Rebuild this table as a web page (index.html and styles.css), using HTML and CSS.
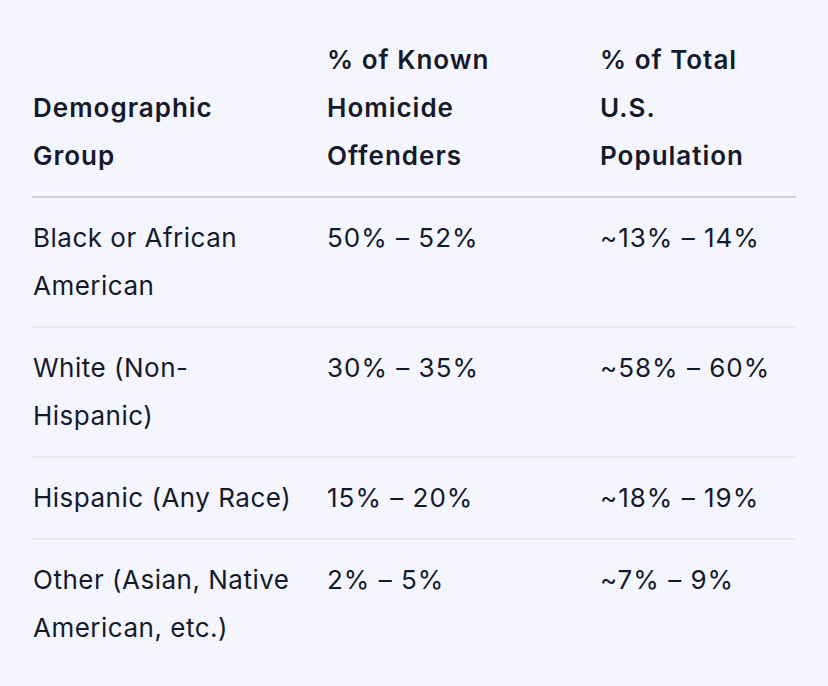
FILE: index.html
```html
<!DOCTYPE html>
<html>
<head>
<meta charset="utf-8">
<link rel="stylesheet" href="styles.css">
</head>
<body>
<div class="wrap">
<table class="data">
<colgroup><col class="c1"><col class="c2"><col class="c3"></colgroup>
<thead>
<tr><th>Demographic Group</th><th>% of Known Homicide Offenders</th><th>% of Total U.S. Population</th></tr>
</thead>
<tbody>
<tr><td>Black or African American</td><td class="num">50% – 52%</td><td class="num">~13% – 14%</td></tr>
<tr><td>White (Non-Hispanic)</td><td class="num">30% – 35%</td><td class="num">~58% – 60%</td></tr>
<tr><td>Hispanic (Any Race)</td><td class="num">15% – 20%</td><td class="num">~18% – 19%</td></tr>
<tr><td>Other (Asian, Native American, etc.)</td><td class="num">2% – 5%</td><td class="num">~7% – 9%</td></tr>
</tbody>
</table>
</div>
</body>
</html>
```
FILE: styles.css
```css
html, body {
  margin: 0;
  padding: 0;
  background: #f4f5fd;
}
body {
  font-family: Inter, "Noto Sans", sans-serif;
  color: #141a2b;
  font-size: 26px;
  letter-spacing: 0.5px;
  line-height: 48px;
}
.wrap {
  padding: 36px 32px 0 32px;
}
.data {
  border-collapse: collapse;
  table-layout: fixed;
  width: 764px;
}
.c1 { width: 294px; }
.c2 { width: 273px; }
.c3 { width: 197px; }
.data th {
  font-weight: 600;
  letter-spacing: 1px;
  text-align: left;
  vertical-align: bottom;
  padding: 0 40px 16px 1px;
  border-bottom: 2px solid #d0d1d9;
}
.data td {
  vertical-align: top;
  padding: 16px 24px 16px 1px;
  border-bottom: 2px solid #e6e7f0;
}
.data td.num {
  letter-spacing: 1px;
}
.data tbody tr:last-child td {
  border-bottom: none;
}
```
